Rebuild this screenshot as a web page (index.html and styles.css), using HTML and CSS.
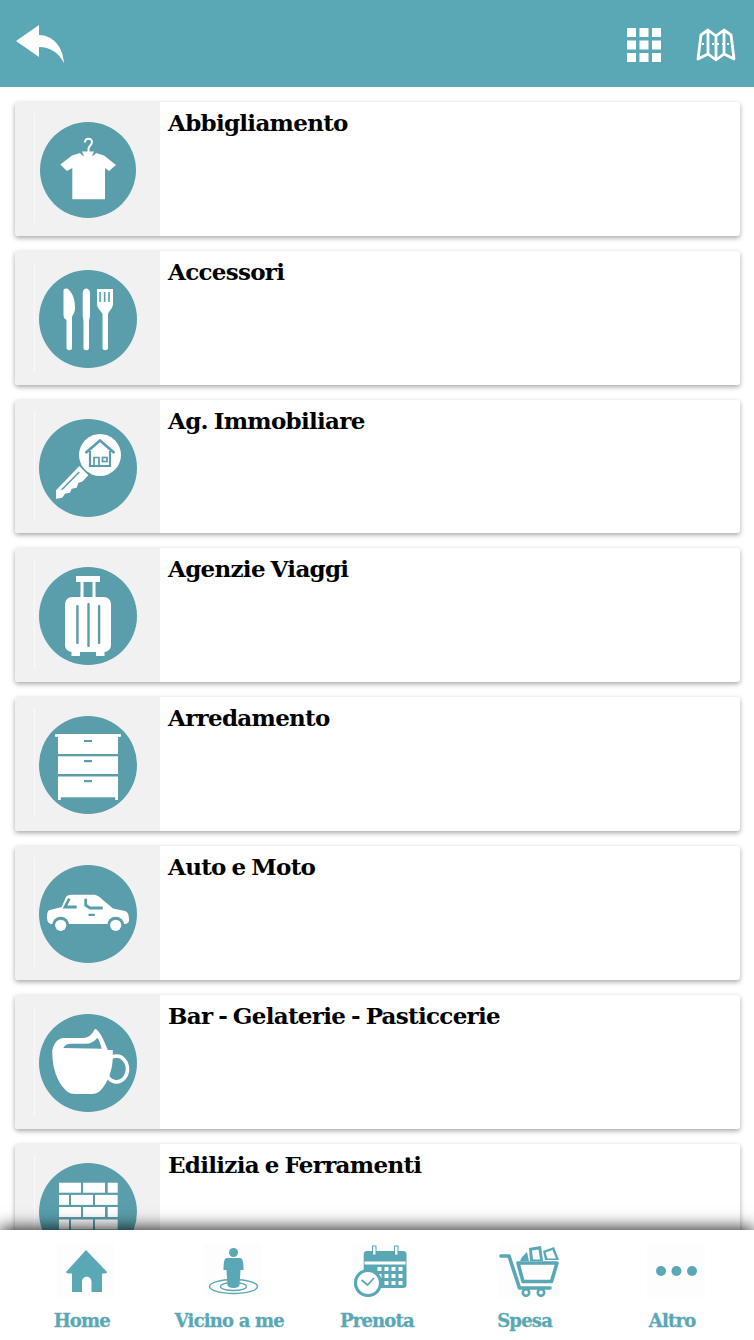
FILE: index.html
```html
<!DOCTYPE html>
<html lang="it">
<head>
  <meta charset="UTF-8" />
  <meta name="viewport" content="width=device-width, initial-scale=1.0" />
  <title>Categorie</title>
  <link rel="stylesheet" href="styles.css">
</head>
<body>

<div class="app">

  <header class="topbar">
    <a class="back" href="#">
      <svg width="50" height="40" viewBox="0 0 50 40"><path d="M1 16 L24 0 V10 C38 10 48 22 49 38 C43 27 35 22 24 22 V32 Z" fill="#fff"/></svg>
    </a>
    <div class="topbar-actions">
      <a href="#">
        <svg class="icon-grid" width="34" height="34" viewBox="0 0 34 34" fill="#fff">
          <rect x="0" y="0" width="9" height="9"/><rect x="12.5" y="0" width="9" height="9"/><rect x="25" y="0" width="9" height="9"/>
          <rect x="0" y="12.5" width="9" height="9"/><rect x="12.5" y="12.5" width="9" height="9"/><rect x="25" y="12.5" width="9" height="9"/>
          <rect x="0" y="25" width="9" height="9"/><rect x="12.5" y="25" width="9" height="9"/><rect x="25" y="25" width="9" height="9"/>
        </svg>
      </a>
      <a href="#">
        <svg width="40" height="34" viewBox="0 0 40 34" fill="none" stroke="#fff" stroke-width="2.8" stroke-linejoin="round">
          <path d="M2 31 L5 7 L12 2 L20 8 L28 2 L35 7 L38 31 L28 26 L20 32 L12 26 Z"/>
          <path d="M12 2 V26 M20 8 V32 M28 2 V26"/>
          <path d="M6 16 H34" stroke-width="1.8" stroke-dasharray="2 3"/>
        </svg>
      </a>
    </div>
  </header>

  <main class="list">

    <a class="card" href="#">
      <div class="thumb"><div class="thumb-inner">
        <svg width="98" height="98" viewBox="0 0 98 98">
          <circle cx="49" cy="49" r="48" fill="#5a9dab"/>
          <path d="M46 21.5 C46 16.5 53 16.5 53 21 C53 24.5 49.5 24.5 49.5 28 V31" fill="none" stroke="#fff" stroke-width="2"/>
          <path d="M41 32 C44 37 54 37 57 32 L65 34.5 L77 44 L70 50 L66 47 V78.3 H33.3 V47 L28 50 L21.3 43.5 L33 34.5 Z" fill="#fff"/>
          <path d="M43 30.5 H55 L52.5 36 H45.5 Z" fill="#fff"/>
        </svg>
      </div></div>
      <h2 class="card-title">Abbigliamento</h2>
    </a>

    <a class="card" href="#">
      <div class="thumb"><div class="thumb-inner">
        <svg width="98" height="98" viewBox="0 0 98 98">
          <circle cx="49" cy="49" r="49" fill="#5a9dab"/>
          <g fill="#fff">
            <path d="M24.5 21 C24.5 18 28 18 30 20 C34 24 36 30 36 38 C36 43 33.5 45 33 47 V78 C33 81 27.5 81 27.5 78 V50 C25 49 24.5 47 24.5 44 Z"/>
            <path d="M43.7 23 C43.7 17 51 17 51 23 V45 C51 48 50 49 50 52 V78 C50 81 44.5 81 44.5 78 V52 C44.5 49 43.7 48 43.7 45 Z"/>
            <path fill-rule="evenodd" d="M58 19 H74 V34 C74 38 70 41 69 44 V78 C69 81 63.5 81 63.5 78 V44 C62 41 58 38 58 34 Z M60.3 22 V32 H61.9 V22 Z M64.8 22 V32 H66.4 V22 Z M69.2 22 V32 H70.8 V22 Z"/>
          </g>
        </svg>
      </div></div>
      <h2 class="card-title">Accessori</h2>
    </a>

    <a class="card" href="#">
      <div class="thumb"><div class="thumb-inner">
        <svg width="98" height="98" viewBox="0 0 98 98">
          <circle cx="49" cy="49" r="49" fill="#5a9dab"/>
          <circle cx="61" cy="36" r="21" fill="#fff"/>
          <path d="M40.3 47 L17 71.3 V79.7 L23.3 78.7 L26 74.7 L31 73.7 L32.7 69.7 L37.7 68.7 L39.3 64 L43.7 62.3 L49.3 56.3 Z" fill="#fff"/>
          <path d="M22.7 70.7 L40.3 53" stroke="#5a9dab" stroke-width="1.6"/>
          <g fill="none" stroke="#5a9dab">
            <path d="M46.5 34 L61 21.5 L75.5 34" stroke-width="2.6"/>
            <path d="M51 32 V47 H71 V32" stroke-width="2.2"/>
            <path d="M55 47 V38.5 H60 V47" stroke-width="1.7"/>
            <rect x="63.5" y="38.5" width="4.5" height="4" stroke-width="1.7"/>
          </g>
        </svg>
      </div></div>
      <h2 class="card-title">Ag. Immobiliare</h2>
    </a>

    <a class="card" href="#">
      <div class="thumb"><div class="thumb-inner">
        <svg width="98" height="98" viewBox="0 0 98 98">
          <circle cx="49" cy="49" r="49" fill="#5a9dab"/>
          <g fill="#fff">
            <rect x="37" y="9" width="24" height="6"/>
            <rect x="41.5" y="15" width="3" height="16"/>
            <rect x="53.5" y="15" width="3" height="16"/>
            <rect x="26" y="30" width="46" height="55" rx="7"/>
            <rect x="32.5" y="84" width="8.5" height="5"/>
            <rect x="57" y="84" width="8.5" height="5"/>
          </g>
          <g fill="#5a9dab">
            <rect x="37.2" y="38" width="2.4" height="39" rx="1"/>
            <rect x="48.3" y="36" width="2.4" height="44" rx="1"/>
            <rect x="58.9" y="38" width="2.4" height="39" rx="1"/>
          </g>
        </svg>
      </div></div>
      <h2 class="card-title">Agenzie Viaggi</h2>
    </a>

    <a class="card" href="#">
      <div class="thumb"><div class="thumb-inner">
        <svg width="98" height="98" viewBox="0 0 98 98">
          <circle cx="49" cy="49" r="49" fill="#5a9dab"/>
          <g fill="#fff">
            <rect x="16" y="18" width="66" height="3" rx="1"/>
            <rect x="19" y="20.5" width="60" height="17.5"/>
            <rect x="19" y="40.3" width="60" height="17.7"/>
            <rect x="19" y="60.5" width="60" height="20.8"/>
            <rect x="19" y="81" width="2.8" height="3"/>
            <rect x="76.2" y="81" width="2.8" height="3"/>
          </g>
          <g fill="#5a9dab">
            <rect x="45" y="24" width="8" height="2"/>
            <rect x="45" y="44" width="8" height="2.2"/>
            <rect x="45" y="64" width="8" height="2.2"/>
          </g>
        </svg>
      </div></div>
      <h2 class="card-title">Arredamento</h2>
    </a>

    <a class="card" href="#">
      <div class="thumb"><div class="thumb-inner">
        <svg width="98" height="98" viewBox="0 0 98 98">
          <circle cx="49" cy="49" r="49" fill="#5a9dab"/>
          <path d="M8 52 C8 47 9 45.5 11 45 L22.7 42 L27 32 C28 30.5 30 29.7 32 29.7 H54 C57 29.7 60 31 64 35 L74 43.5 L86 46 C89 47 90 50 90 55 C90 58 88 59 85 59 H13 C10 59 8 57 8 52 Z" fill="#fff"/>
          <circle cx="21.7" cy="60.3" r="8.5" fill="#5a9dab"/>
          <circle cx="76.7" cy="60.3" r="8.5" fill="#5a9dab"/>
          <circle cx="21.7" cy="60.3" r="5.6" fill="#fff"/>
          <circle cx="76.7" cy="60.3" r="5.6" fill="#fff"/>
          <path d="M30.3 33.7 L26 42 H37.7 M46.7 33.7 V40.3 L51 43 H63.7" fill="none" stroke="#5a9dab" stroke-width="2.8"/>
          <rect x="49.3" y="48.7" width="6.7" height="2.4" rx="1" fill="#5a9dab"/>
        </svg>
      </div></div>
      <h2 class="card-title">Auto e Moto</h2>
    </a>

    <a class="card" href="#">
      <div class="thumb"><div class="thumb-inner">
        <svg width="98" height="98" viewBox="0 0 98 98">
          <circle cx="49" cy="49" r="49" fill="#5a9dab"/>
          <ellipse cx="77.5" cy="55" rx="11" ry="13" fill="none" stroke="#fff" stroke-width="3.5"/>
          <path d="M13.3 36 H73.7 C74.5 50 72 62 65 72 C62 77 58 80 53 80 H36 C30 80 27 77 23 72 C16 62 13 50 13.3 36 Z" fill="#fff"/>
          <path d="M13.3 37 C14 31 18 24 25 24 H44 C50 24 53 20 56 14.7 C60 16 64 24 69.3 37 Z" fill="#fff"/>
          <path d="M24.3 34 C26 31 28 29.7 32 29.7 H46 C51 30 55 28 58.3 23.7 C60 26 61.5 30 62.7 34.7 Z" fill="#5a9dab"/>
        </svg>
      </div></div>
      <h2 class="card-title">Bar - Gelaterie - Pasticcerie</h2>
    </a>

    <a class="card" href="#">
      <div class="thumb"><div class="thumb-inner">
        <svg width="98" height="98" viewBox="0 0 98 98">
          <circle cx="49" cy="49" r="49" fill="#5a9dab"/>
          <g fill="#fff">
            <rect x="20" y="19.7" width="22" height="10"/><rect x="44" y="19.7" width="22" height="10"/><rect x="68.7" y="19.7" width="10" height="10"/>
            <rect x="20" y="31.9" width="10" height="10"/><rect x="32" y="31.9" width="22" height="10"/><rect x="56" y="31.9" width="22.7" height="10"/>
            <rect x="20" y="44" width="22" height="10"/><rect x="44" y="44" width="22" height="10"/><rect x="68.7" y="44" width="10" height="10"/>
            <rect x="20" y="56.5" width="10" height="10"/><rect x="32" y="56.5" width="22" height="10"/><rect x="56" y="56.5" width="22.7" height="10"/>
            <rect x="20" y="69" width="22" height="10"/><rect x="44" y="69" width="22" height="10"/><rect x="68.7" y="69" width="10" height="10"/>
          </g>
        </svg>
      </div></div>
      <h2 class="card-title">Edilizia e Ferramenti</h2>
    </a>

  </main>

  <nav class="tabbar">
    <a class="tab" href="#">
      <span class="tab-icon">
        <svg width="58" height="55" viewBox="0 0 58 55">
          <path d="M29 7 L50 29 C50 30 49 30.5 45 30.5 V49 H34.5 V39 C34.5 32 25 32 25 39 V49 H15 V30.5 C11 30.5 9 30 9 29 Z" fill="#5aa7b6"/>
        </svg>
      </span>
      <span class="tab-label">Home</span>
    </a>
    <a class="tab" href="#">
      <span class="tab-icon">
        <svg width="58" height="55" viewBox="0 0 58 55">
          <ellipse cx="29.5" cy="43.5" rx="24" ry="7" fill="none" stroke="#5aa7b6" stroke-width="1.3"/>
          <ellipse cx="29.5" cy="43.5" rx="13" ry="4" fill="none" stroke="#5aa7b6" stroke-width="1.3"/>
          <circle cx="29.5" cy="9.5" r="4.5" fill="#5aa7b6"/>
          <path d="M22.5 15 H36.5 C38.5 16 39.5 18 39.5 27 H36.5 L35.5 42 C35.5 46 23.5 46 23.5 42 L22.5 27 H19.5 C19.5 18 20.5 16 22.5 15 Z" fill="#5aa7b6"/>
        </svg>
      </span>
      <span class="tab-label">Vicino a me</span>
    </a>
    <a class="tab" href="#">
      <span class="tab-icon">
        <svg width="58" height="55" viewBox="0 0 58 55">
          <path d="M11.7 11 C11.7 9 13 8 15 8 H51 C53 8 54.5 9 54.5 11 V42 C54.5 44 53 45 51 45 H11.7 Z" fill="#5aa7b6"/>
          <rect x="12.5" y="18.5" width="41" height="3" fill="#fff"/>
          <rect x="20.5" y="3" width="3.5" height="9" fill="#fff" stroke="#5aa7b6" stroke-width="1"/>
          <rect x="42.5" y="3" width="3.5" height="9" fill="#fff" stroke="#5aa7b6" stroke-width="1"/>
          <g fill="#fff">
            <rect x="25.5" y="24" width="4" height="4"/><rect x="32.5" y="24" width="4" height="4"/><rect x="39.5" y="24" width="4" height="4"/><rect x="46.5" y="24" width="4" height="4"/>
            <rect x="25.5" y="31" width="4" height="4"/><rect x="32.5" y="31" width="4" height="4"/><rect x="39.5" y="31" width="4" height="4"/><rect x="46.5" y="31" width="4" height="4"/>
            <rect x="32.5" y="38" width="4" height="4"/><rect x="39.5" y="38" width="4" height="4"/><rect x="46.5" y="38" width="4" height="4"/>
          </g>
          <circle cx="16" cy="40" r="12.5" fill="#fff" stroke="#5aa7b6" stroke-width="3.2"/>
          <path d="M9.5 37 L15.5 42 L22 35" fill="none" stroke="#5aa7b6" stroke-width="1.8"/>
        </svg>
      </span>
      <span class="tab-label">Prenota</span>
    </a>
    <a class="tab" href="#">
      <span class="tab-icon">
        <svg width="60" height="55" viewBox="0 0 60 55">
          <path d="M2 13 H10 L20.5 45 H51" fill="none" stroke="#5aa7b6" stroke-width="3.6" stroke-linecap="round" stroke-linejoin="round"/>
          <path d="M19 20 H58 L52.5 38.5 H24 Z" fill="#fff" stroke="#5aa7b6" stroke-width="3.6" stroke-linejoin="round"/>
          <circle cx="27" cy="49.5" r="3.2" fill="#fff" stroke="#5aa7b6" stroke-width="2.6"/>
          <circle cx="42" cy="49.5" r="3.2" fill="#fff" stroke="#5aa7b6" stroke-width="2.6"/>
          <path d="M30 5 L42 3 L44 18 H31 Z M44 8 L55 4 L60 17 H46 Z M23 14 L28 9 L30 18 H21 Z" fill="#5aa7b6"/>
          <path d="M33 7.5 L39.5 6.5 L41 16.5 H34 Z" fill="#fff"/>
          <path d="M46.5 9.5 L53.5 7 L57 15.5 H48.5 Z" fill="#fff"/>
        </svg>
      </span>
      <span class="tab-label">Spesa</span>
    </a>
    <a class="tab" href="#">
      <span class="tab-icon">
        <svg width="58" height="55" viewBox="0 0 58 55" fill="#5aa7b6">
          <circle cx="14" cy="28" r="5"/><circle cx="29.5" cy="28" r="5"/><circle cx="45" cy="28" r="5"/>
        </svg>
      </span>
      <span class="tab-label">Altro</span>
    </a>
  </nav>

</div>

</body>
</html>
```

FILE: styles.css
```css
* { box-sizing: border-box; }
html, body { height: 100%; }
body {
  margin: 0;
  background: #fff;
  font-family: 'DejaVu Serif', 'Liberation Serif', serif;
  color: #000;
}
a { color: inherit; text-decoration: none; }
svg { display: block; }

.app {
  display: flex;
  flex-direction: column;
  height: 1340px;
  overflow: hidden;
}

.topbar {
  flex: none;
  height: 87px;
  background: #5aa7b6;
  display: flex;
  justify-content: space-between;
  padding: 25px 18px 0 15px;
}
.topbar-actions {
  display: flex;
  gap: 35px;
  padding-top: 3px;
}

.list {
  flex: 1;
  min-height: 0;
  overflow: hidden;
  display: flex;
  flex-direction: column;
  gap: 15px;
  padding: 15px 14px 0 15px;
}
.card {
  flex: none;
  height: 133.8px;
  display: flex;
  background: #fff;
  border-radius: 3px;
  overflow: hidden;
  box-shadow: 0 2px 5px rgba(0,0,0,0.35);
}
.thumb {
  flex: none;
  width: 145px;
  background: #f1f1f1;
  padding: 11px 0 13px 19px;
}
.thumb-inner {
  height: 110px;
  border-left: 1px solid #fafafa;
  padding: 4px 0 0 4px;
  display: flex;
  align-items: center;
}
.card-title {
  margin: 7px 0 0 8px;
  font-size: 23px;
  line-height: 28px;
  font-weight: 700;
  letter-spacing: -0.7px;
  word-spacing: -1.5px;
}

.tabbar {
  flex: none;
  position: relative;
  height: 110px;
  background: #fff;
  display: flex;
  padding: 13px 8px 0;
  box-shadow: 0 -2px 16px rgba(0,0,0,0.85);
}
.tab {
  flex: 1;
  display: flex;
  flex-direction: column;
  align-items: center;
  color: #5aa7b6;
}
.tab-icon {
  display: block;
  margin-left: 8px;
  height: 55px;
  background: #fdfdfd;
}
.tab-label {
  margin-top: 11px;
  font-size: 18px;
  line-height: 24px;
  font-weight: 700;
  letter-spacing: -0.8px;
  -webkit-text-stroke: 0.3px #5aa7b6;
}
```
